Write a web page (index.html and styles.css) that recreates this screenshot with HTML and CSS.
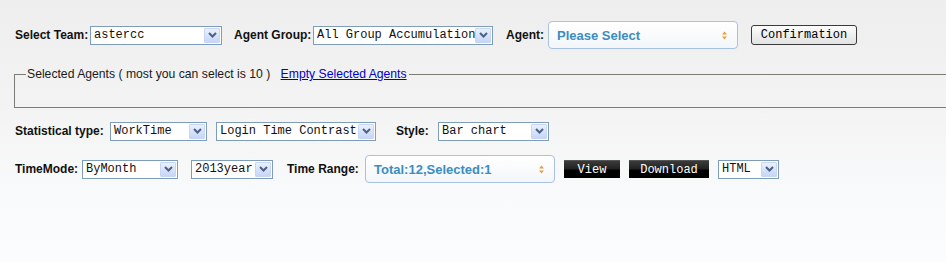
FILE: index.html
```html
<!DOCTYPE html>
<html><head>
<meta charset="utf-8"><title>Agent Statistics</title>
<link rel="stylesheet" href="styles.css">
</head>
<body>
<div class="row r1">
<span class="lbl l-team">Select Team:</span>
<span class="sel w-team"><span class="val">astercc</span><span class="arr"><svg width="9" height="6" viewBox="0 0 9 6"><path d="M1 1 L4.5 4.5 L8 1" fill="none" stroke="#4d6185" stroke-width="2"/></svg></span></span>
<span class="lbl l-group">Agent Group:</span>
<span class="sel w-group"><span class="val">All Group Accumulation</span><span class="arr"><svg width="9" height="6" viewBox="0 0 9 6"><path d="M1 1 L4.5 4.5 L8 1" fill="none" stroke="#4d6185" stroke-width="2"/></svg></span></span>
<span class="lbl l-agent">Agent:</span>
<span class="chz"><span>Please Select</span><svg width="5" height="9" viewBox="0 0 5 9"><polygon points="0,3.5 2.5,0.5 5,3.5" fill="#e9a13b"/><polygon points="0,5.5 2.5,8.5 5,5.5" fill="#e9a13b"/></svg></span>
<button class="btn">Confirmation</button>
</div>

<fieldset class="agents">
<legend>Selected Agents ( most you can select is 10 ) <a href="#">Empty Selected Agents</a></legend>
<div class="agents-list"></div>
</fieldset>

<div class="row r3">
<span class="lbl l-stat">Statistical type:</span>
<span class="sel w-work"><span class="val">WorkTime</span><span class="arr"><svg width="9" height="6" viewBox="0 0 9 6"><path d="M1 1 L4.5 4.5 L8 1" fill="none" stroke="#4d6185" stroke-width="2"/></svg></span></span>
<span class="sel w-login"><span class="val">Login Time Contrast</span><span class="arr"><svg width="9" height="6" viewBox="0 0 9 6"><path d="M1 1 L4.5 4.5 L8 1" fill="none" stroke="#4d6185" stroke-width="2"/></svg></span></span>
<span class="lbl l-style">Style:</span>
<span class="sel w-chart"><span class="val">Bar chart</span><span class="arr"><svg width="9" height="6" viewBox="0 0 9 6"><path d="M1 1 L4.5 4.5 L8 1" fill="none" stroke="#4d6185" stroke-width="2"/></svg></span></span>
</div>

<div class="row r4">
<span class="lbl l-mode">TimeMode:</span>
<span class="sel w-month"><span class="val">ByMonth</span><span class="arr"><svg width="9" height="6" viewBox="0 0 9 6"><path d="M1 1 L4.5 4.5 L8 1" fill="none" stroke="#4d6185" stroke-width="2"/></svg></span></span>
<span class="sel w-year"><span class="val">2013year</span><span class="arr"><svg width="9" height="6" viewBox="0 0 9 6"><path d="M1 1 L4.5 4.5 L8 1" fill="none" stroke="#4d6185" stroke-width="2"/></svg></span></span>
<span class="lbl l-range">Time Range:</span>
<span class="chz"><span>Total:12,Selected:1</span><svg width="5" height="9" viewBox="0 0 5 9"><polygon points="0,3.5 2.5,0.5 5,3.5" fill="#e9a13b"/><polygon points="0,5.5 2.5,8.5 5,5.5" fill="#e9a13b"/></svg></span>
<button class="dbtn w-view">View</button>
<button class="dbtn w-down">Download</button>
<span class="sel w-html"><span class="val">HTML</span><span class="arr"><svg width="9" height="6" viewBox="0 0 9 6"><path d="M1 1 L4.5 4.5 L8 1" fill="none" stroke="#4d6185" stroke-width="2"/></svg></span></span>
</div>
</body></html>
```

FILE: styles.css
```css
body {
margin: 0;
height: 262px;
overflow: hidden;
background: linear-gradient(#eeeeee, #f3f3f3 40%, #f9fafb 75%, #fbfcfe);
font-family: "Liberation Sans", Arial, sans-serif;
font-size: 12px;
color: #111;
}
.row {
display: flex;
align-items: center;
padding-left: 15px;
}
.r1 {
margin-top: 21px;
height: 28px;
}
.r3 {
margin-top: 13px;
height: 20px;
}
.r4 {
margin-top: 14px;
height: 28px;
}
.lbl {
font-weight: bold;
white-space: nowrap;
}
.l-team { width: 75px; }
.l-group { width: 79px; }
.l-agent { width: 42px; }
.l-stat { width: 95px; }
.l-style { width: 42px; }
.l-mode { width: 67px; }
.l-range { width: 78px; }

.sel {
display: flex;
align-items: center;
box-sizing: border-box;
height: 19px;
border: 1px solid #7f9db9;
background: #fff;
margin-right: 12px;
}
.sel .val {
flex: 1;
padding-left: 3px;
font-family: "Liberation Mono", "Courier New", monospace;
font-size: 12px;
color: #111;
white-space: nowrap;
overflow: hidden;
}
.sel .arr {
display: flex;
align-items: center;
justify-content: center;
box-sizing: border-box;
width: 16px;
height: 15px;
margin-right: 1px;
border: 1px solid #c8d6f6;
border-radius: 1px;
background: linear-gradient(#eaf0fd, #c6d6f7);
}
.w-team { width: 132px; }
.w-group { width: 180px; margin-right: 13px; }
.w-work { width: 97px; margin-right: 9px; }
.w-login { width: 160px; margin-right: 20px; }
.w-chart { width: 111px; }
.w-month { width: 96px; margin-right: 13px; }
.w-year { width: 82px; margin-right: 14px; }
.w-html { width: 61px; }

.chz {
display: flex;
align-items: center;
justify-content: space-between;
box-sizing: border-box;
width: 190px;
height: 28px;
padding: 0 10px 0 8px;
border: 1px solid #a9c1e2;
border-radius: 4px;
background: linear-gradient(#ffffff, #f3f6fa);
color: #3b8dc1;
font-weight: bold;
font-size: 13px;
margin-right: 13px;
}
.r4 .chz {
margin-right: 9px;
}
.btn {
box-sizing: border-box;
height: 20px;
width: 106px;
padding: 0;
border: 1px solid #3a3a3a;
border-radius: 3px;
background: linear-gradient(#fcfcfc, #e2e2e2);
font-family: "Liberation Mono", "Courier New", monospace;
font-size: 12px;
color: #000;
}
.dbtn {
box-sizing: border-box;
height: 18px;
padding: 0;
border: none;
border-top: 1px solid #555;
background: linear-gradient(#3b3b3b, #222 45%, #000 55%, #000);
font-family: "Liberation Mono", "Courier New", monospace;
font-size: 12px;
color: #fff;
margin-right: 9px;
}
.w-view { width: 56px; }
.w-down { width: 80px; }

.agents {
margin: 18px 0 0 14px;
padding: 0;
border: 1px solid #7c7c74;
border-right: none;
}
.agents legend {
margin-left: 11px;
padding: 0 2px 0 1px;
line-height: 14px;
font-size: 12.2px;
color: #1a1a1a;
}
.agents legend a {
margin-left: 7px;
color: #0000cc;
}
.agents-list {
height: 26px;
}
```
